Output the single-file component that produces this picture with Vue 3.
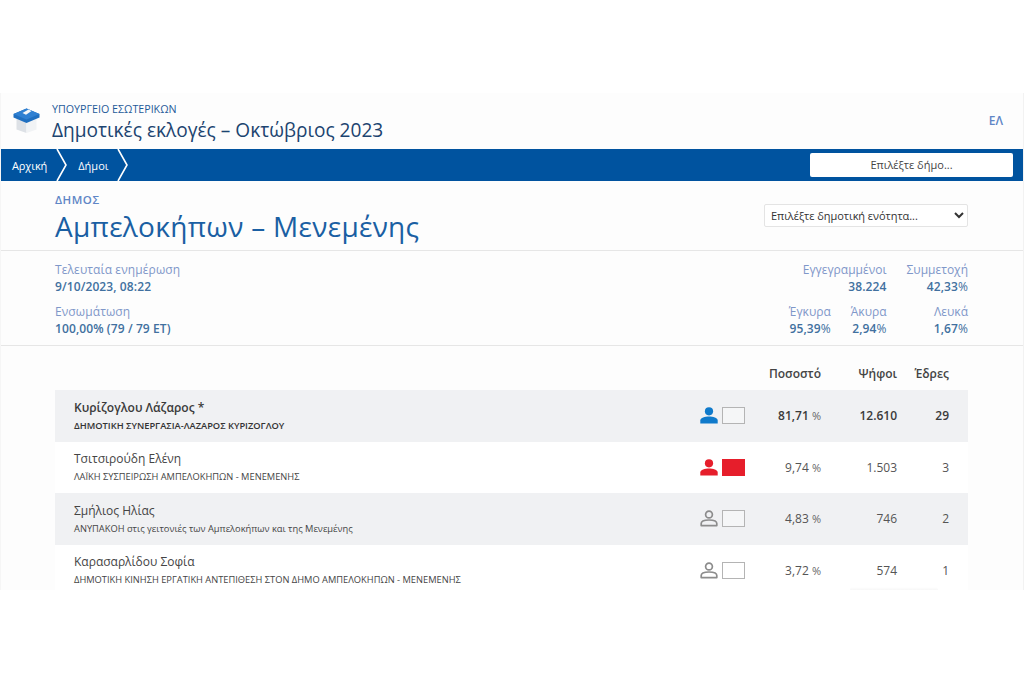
<script setup>
const stats = [
  { label: 'Τελευταία ενημέρωση', value: '9/10/2023, 08:22' },
  { label: 'Ενσωμάτωση', value: '100,00%', rest: ' (79 / 79 ΕΤ)' },
];

const rows = [
  { name: 'Κυρίζογλου Λάζαρος *', list: 'ΔΗΜΟΤΙΚΗ ΣΥΝΕΡΓΑΣΙΑ-ΛΑΖΑΡΟΣ ΚΥΡΙΖΟΓΛΟΥ', pct: '81,71', votes: '12.610', seats: 29, kind: 'blue' },
  { name: 'Τσιτσιρούδη Ελένη', list: 'ΛΑΪΚΗ ΣΥΣΠΕΙΡΩΣΗ ΑΜΠΕΛΟΚΗΠΩΝ - ΜΕΝΕΜΕΝΗΣ', pct: '9,74', votes: '1.503', seats: 3, kind: 'red' },
  { name: 'Σμήλιος Ηλίας', list: 'ΑΝΥΠΑΚΟΗ στις γειτονιές των Αμπελοκήπων και της Μενεμένης', pct: '4,83', votes: '746', seats: 2, kind: 'grey' },
  { name: 'Καρασαρλίδου Σοφία', list: 'ΔΗΜΟΤΙΚΗ ΚΙΝΗΣΗ ΕΡΓΑΤΙΚΗ ΑΝΤΕΠΙΘΕΣΗ ΣΤΟΝ ΔΗΜΟ ΑΜΠΕΛΟΚΗΠΩΝ - ΜΕΝΕΜΕΝΗΣ', pct: '3,72', votes: '574', seats: 1, kind: 'grey' },
];
</script>

<template>
  <div class="frame">
    <div class="page">
      <header class="top">
        <svg class="logo" viewBox="0 0 27 25" width="27" height="25">
          <path d="M3.5 10 L13.5 14 V25 L3.5 21.5 Z" fill="#dde1e6" />
          <path d="M13.5 14 L23.5 10 V21.5 L13.5 25 Z" fill="#f1f3f5" />
          <path d="M0.5 6 L13.5 0.5 L26.5 6 V9.5 L13.5 15 L0.5 9.5 Z" fill="#1f6fc0" />
          <path d="M0.5 6 L13.5 0.5 L26.5 6 L13.5 11.5 Z" fill="#2f80d2" />
          <path d="M9.5 5 L15.5 1.5 L18.5 3 L13 6.8 Z" fill="#f4f6f8" />
        </svg>
        <div class="top-text">
          <div class="ministry">ΥΠΟΥΡΓΕΙΟ ΕΣΩΤΕΡΙΚΩΝ</div>
          <div class="election">Δημοτικές εκλογές – Οκτώβριος 2023</div>
        </div>
        <span class="lang">ΕΛ</span>
      </header>

      <nav class="bar">
        <a class="crumb">Αρχική</a>
        <svg class="chev" viewBox="0 0 12 32" width="12" height="32"><path d="M1 0 L10 16 L1 32" fill="none" stroke="#fff" stroke-width="1.6" /></svg>
        <a class="crumb second">Δήμοι</a>
        <svg class="chev last" viewBox="0 0 12 32" width="12" height="32"><path d="M1 0 L10 16 L1 32" fill="none" stroke="#fff" stroke-width="1.6" /></svg>
        <div class="picker">Επιλέξτε δήμο...</div>
      </nav>

      <section class="title-row">
        <div>
          <div class="kicker">ΔΗΜΟΣ</div>
          <h1>Αμπελοκήπων – Μενεμένης</h1>
        </div>
        <select class="unit">
          <option>Επιλέξτε δημοτική ενότητα...</option>
        </select>
      </section>

      <section class="summary">
        <div class="left-stats">
          <div v-for="s in stats" :key="s.label" class="stat">
            <div class="lbl">{{ s.label }}</div>
            <div class="val">{{ s.value }}{{ s.rest }}</div>
          </div>
        </div>
        <div class="right-stats">
          <div class="stat r wide"><div class="lbl">Εγγεγραμμένοι</div><div class="val">38.224</div></div>
          <div class="stat r"><div class="lbl">Συμμετοχή</div><div class="val">42,33<small>%</small></div></div>
          <div class="stat r"><div class="lbl">Έγκυρα</div><div class="val">95,39<small>%</small></div></div>
          <div class="stat r"><div class="lbl">Άκυρα</div><div class="val">2,94<small>%</small></div></div>
          <div class="stat r"><div class="lbl">Λευκά</div><div class="val">1,67<small>%</small></div></div>
        </div>
      </section>

      <section class="results">
        <div class="head">
          <span class="col-pct">Ποσοστό</span>
          <span class="col-votes">Ψήφοι</span>
          <span class="col-seats">Έδρες</span>
        </div>
        <div v-for="(row, i) in rows" :key="row.name" class="row" :class="{ shaded: i % 2 === 0, lead: i === 0 }">
          <div class="who">
            <div class="name">{{ row.name }}</div>
            <div class="list">{{ row.list }}</div>
          </div>
          <div class="marks" :class="row.kind">
            <svg viewBox="0 0 18 17" width="18" height="17" class="person">
              <template v-if="row.kind === 'grey'">
                <circle cx="9" cy="4.5" r="3.4" fill="none" stroke="currentColor" stroke-width="1.7" />
                <path d="M1.2 15.6 V13.6 C1.2 11.2 5 10 9 10 C13 10 16.8 11.2 16.8 13.6 V15.6 Z" fill="none" stroke="currentColor" stroke-width="1.7" stroke-linejoin="round" />
              </template>
              <template v-else>
                <circle cx="9" cy="4.3" r="4.1" fill="currentColor" />
                <path d="M0.3 16.5 V13.6 C0.3 10.8 5 9.6 9 9.6 C13 9.6 17.7 10.8 17.7 13.6 V16.5 Z" fill="currentColor" />
              </template>
            </svg>
            <span class="box"></span>
          </div>
          <div class="col-pct num">{{ row.pct }} <small>%</small></div>
          <div class="col-votes num">{{ row.votes }}</div>
          <div class="col-seats num">{{ row.seats }}</div>
        </div>
      </section>
      <div class="fade"></div>
    </div>
  </div>
</template>

<style>
html, body { background: #fff; }
</style>

<style scoped>
.frame {
  width: 1024px;
  height: 683px;
  padding-top: 93px;
  box-sizing: border-box;
  background: #fff;
  font-family: "Open Sans", "Noto Sans", sans-serif;
}

.page {
  position: relative;
  height: 497px;
  overflow: hidden;
  background: #fdfdfd;
  border-right: 1px solid #f2f2f2;
  border-left: 1px solid #f6f6f6;
}

.top {
  height: 56px;
  display: flex;
  align-items: flex-start;
  padding-left: 12px;
}

.logo { margin-top: 15px; margin-right: 12px; }

.top-text { padding-top: 9px; }

.ministry {
  font-size: 10.7px;
  line-height: 14px;
  color: #1f5a99;
}

.election {
  font-size: 19.1px;
  line-height: 24px;
  font-weight: 500;
  color: #1c4470;
  margin-top: 2px;
}

.lang {
  margin-left: auto;
  margin-right: 20px;
  margin-top: 20px;
  font-size: 12px;
  line-height: 16px;
  font-weight: 600;
  color: #5f86c6;
}

.bar {
  height: 32px;
  background: #00539f;
  display: flex;
  align-items: center;
  color: #fff;
  font-size: 11px;
}

.crumb { padding-left: 11px; letter-spacing: -0.1px; }
.chev { margin-left: 9px; }
.crumb.second { padding-left: 10px; letter-spacing: 0; }
.chev.last { margin-left: 8px; }

.picker {
  margin-left: auto;
  margin-right: 10px;
  width: 203px;
  height: 24px;
  line-height: 24px;
  background: #fff;
  border-radius: 2px;
  color: #444;
  font-size: 11px;
  text-align: center;
}

.title-row {
  height: 70px;
  padding: 12px 55px 0 54px;
  box-sizing: border-box;
  display: flex;
  justify-content: space-between;
  border-bottom: 1px solid #e6e6e6;
}

.kicker {
  font-size: 11.5px;
  line-height: 14px;
  font-weight: 600;
  color: #5f86c6;
  letter-spacing: 0.5px;
}

h1 {
  margin: 1px 0 0;
  font-size: 28px;
  line-height: 36px;
  font-weight: 500;
  color: #1a5fa3;
  letter-spacing: 0.3px;
}

.unit {
  width: 204px;
  height: 23px;
  margin-top: 11px;
  font-family: inherit;
  font-size: 11px;
  letter-spacing: -0.05px;
  color: #333;
  background: #fff;
  border: 1px solid #e4e4e4;
  border-radius: 2px;
  padding-left: 2px;
}

.summary {
  height: 95px;
  padding: 10px 55px 0 54px;
  box-sizing: border-box;
  display: flex;
  justify-content: space-between;
  border-bottom: 1px solid #e6e6e6;
}

.stat { margin-bottom: 8px; }

.lbl {
  font-size: 12px;
  line-height: 17px;
  letter-spacing: 0.1px;
  color: #7f97c9;
}

.val {
  font-size: 12px;
  line-height: 17px;
  font-weight: 600;
  letter-spacing: 0.1px;
  color: #41709f;
}

.val small { font-size: 12px; font-weight: 400; }

.right-stats {
  display: grid;
  grid-template-columns: auto auto 1fr;
  column-gap: 20px;
  align-content: start;
}

.stat.r { text-align: right; }
.stat.r .lbl { letter-spacing: 0; }
.stat.wide { grid-column: 1 / span 2; }

.results { padding: 0 55px 0 54px; }

.head {
  height: 44px;
  padding-top: 10px;
  box-sizing: border-box;
  display: flex;
  justify-content: flex-end;
  align-items: center;
  font-size: 12px;
  font-weight: 600;
  color: #444;
}

.row {
  height: 51.5px;
  display: flex;
  align-items: center;
  font-size: 12px;
  color: #555;
  background: #fff;
}

.row.shaded { background: #f0f1f3; }

.who { padding-left: 19px; flex: 1; }

.name { font-size: 12px; line-height: 17px; color: #444; }
.list { font-size: 9.3px; line-height: 14px; margin-top: 3px; color: #444; }
.lead .name { font-weight: 600; color: #3a3a3a; }
.lead .list { font-weight: 600; color: #333; }
.lead .num { font-weight: 600; color: #3a3a3a; }
.lead .num small { font-weight: 400; }

.marks { display: flex; align-items: center; gap: 4px; }
.marks.blue { color: #0f7acb; }
.marks.red { color: #e61e2b; }
.marks.grey { color: #8c8c8c; }

.box {
  width: 23px;
  height: 17px;
  box-sizing: border-box;
  background: #fff;
  border: 1px solid #b4b4b4;
}

.shaded .box { background: #f5f6f7; }
.marks.red .box { background: #e61e2b; border-color: #e61e2b; }

.col-pct, .col-votes, .col-seats { text-align: right; box-sizing: border-box; }
.col-pct { width: 76px; }
.col-votes { width: 76px; }
.col-seats { width: 71px; padding-right: 19px; }

.num small { font-size: 11px; color: #666; }

.fade {
  position: absolute;
  left: 849px;
  bottom: 0;
  width: 88px;
  height: 3px;
  background: linear-gradient(#fff, #f7f7f7);
  border-radius: 6px 6px 0 0;
}
</style>
